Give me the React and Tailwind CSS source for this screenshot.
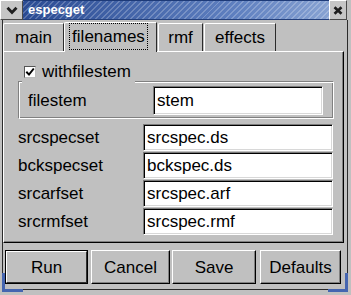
export default function App() {
  const raised =
    "border-t border-l border-t-white border-l-white border-b border-r border-b-black border-r-black shadow-[inset_-1px_-1px_0_#808080]";
  const Entry = ({ value, w }) => (
    <div
      className={`${w} h-full bg-white border border-t-[#7a7a7a] border-l-[#7a7a7a] border-b-white border-r-white shadow-[inset_1px_1px_0_#000,inset_-1px_-1px_0_#d8d8d8] pl-[3px] flex items-center text-[17px] leading-none`}
    >
      {value}
    </div>
  );
  const rows = [
    ["srcspecset", "srcspec.ds"],
    ["bckspecset", "bckspec.ds"],
    ["srcarfset", "srcspec.arf"],
    ["srcrmfset", "srcspec.rmf"],
  ];
  return (
    <div className="relative w-[351px] h-[295px] overflow-hidden bg-[#c0c0c0] font-['Liberation_Sans',Arial,sans-serif] text-black select-none">
      {/* title bar */}
      <div className="flex h-[20px]">
        <div className="w-[23px] h-[20px] flex items-center justify-center bg-[#c6c6c6] border-t border-l border-white border-r border-b border-r-[#4a4a4a] border-b-[#4a4a4a]">
          <svg width="12" height="9" viewBox="0 0 12 9">
            <path d="M1.5 1.8 L6 6.5 L10.5 1.8" fill="none" stroke="#1e1e1e" strokeWidth="2.8" />
          </svg>
        </div>
        <div className="flex-1 h-[20px] flex items-center pl-[5px] border-t border-[#1d3a78] border-b border-b-[#24407c] bg-[image:repeating-linear-gradient(135deg,rgba(255,255,255,0.22)_0px,rgba(255,255,255,0.22)_1.4px,transparent_1.4px,transparent_4.2px),linear-gradient(to_right,#2a4b93,#5f80c0_70%,#87a2d2)]">
          <span className="text-white font-bold text-[13px] leading-none pb-[1px]">especget</span>
        </div>
        <div className="w-[18px] h-[20px] flex items-center justify-center bg-[#c6c6c6] border-t border-l border-white border-r border-b border-r-[#4a4a4a] border-b-[#4a4a4a]">
          <svg width="10" height="9" viewBox="0 0 10 9">
            <path d="M1.5 1.2 L8.5 7.8 M8.5 1.2 L1.5 7.8" fill="none" stroke="#1e1e1e" strokeWidth="2.6" />
          </svg>
        </div>
        <div className="w-[4px]" />
      </div>

      {/* body */}
      <div className="ml-[2px] w-[346px] h-[270px] border-l border-r border-b border-[#2b2b2b] flex flex-col">
        {/* tabs */}
        <div className="pt-[2px] h-[31px] flex items-end text-[17px] leading-none">
          <div className="w-[61px] h-[28px] flex items-center justify-center border-t border-l border-white border-r border-r-[#2b2b2b] rounded-tl-[2px]">
            main
          </div>
          <div className="relative z-10 w-[93px] h-[30px] -mb-px bg-[#c0c0c0] flex justify-center pt-0 pr-[4px] border-t border-l border-white border-r border-r-[#2b2b2b] rounded-tl-[2px]">
            <span className="h-[27px] px-[2px] flex items-center border border-dotted border-black">filenames</span>
          </div>
          <div className="ml-[1px] w-[45px] h-[28px] flex items-center justify-center border-t border-l border-white border-r border-r-[#2b2b2b] rounded-tl-[2px]">
            rmf
          </div>
          <div className="ml-[1px] w-[72px] h-[28px] flex items-center justify-center border-t border-l border-white border-r border-r-[#2b2b2b] rounded-tl-[2px]">
            effects
          </div>
        </div>

        {/* panel */}
        <div className="w-[341px] h-[192px] border-t border-l border-white border-b border-r border-b-black border-r-black shadow-[inset_-1px_-1px_0_#808080] flex flex-col text-[17px] leading-none">
          {/* frame */}
          <div className="relative ml-[14px] mt-[29px] w-[316px] h-[38px] border border-t-[#808080] border-l-[#808080] border-b-white border-r-white shadow-[inset_1px_1px_0_#fff,inset_-1px_-1px_0_#808080] flex items-center">
            <div className="absolute left-[3px] top-[-23px] w-[113px] h-[25px] bg-[#c0c0c0] flex items-center pl-[2px]">
              <div className="w-[12px] h-[12px] bg-white border border-t-[#555] border-l-[#555] border-b-[#bbb] border-r-[#bbb] flex items-center justify-center">
                <svg width="10" height="10" viewBox="0 0 10 10">
                  <path d="M1.3 4.8 L4 7.6 L8.8 1.5" fill="none" stroke="#000" strokeWidth="2" />
                </svg>
              </div>
              <span className="ml-[6px]">withfilestem</span>
            </div>
            <div className="pl-[9px] w-[134px]">filestem</div>
            <div className="h-[29px]">
              <Entry value="stem" w="w-[170px]" />
            </div>
          </div>

          {/* rows */}
          <div className="mt-[5px] flex flex-col gap-[1px]">
            {rows.map(([label, value]) => (
              <div key={label} className="h-[27px] flex items-center">
                <div className="pl-[14px] w-[139px]">{label}</div>
                <Entry value={value} w="w-[190px]" />
              </div>
            ))}
          </div>
        </div>

        {/* buttons */}
        <div className="mt-[7px] ml-[2px] flex h-[34px] text-[17px] leading-none">
          <div className="w-[83px] h-full border border-black">
            <div className="w-full h-full flex items-center justify-center border-t border-l border-white border-b border-r border-b-[#303030] border-r-[#303030]">
              Run
            </div>
          </div>
          <div className={`ml-[3px] w-[79px] h-full flex items-center justify-center ${raised}`}>Cancel</div>
          <div className={`ml-[2px] w-[84px] h-full flex items-center justify-center ${raised}`}>Save</div>
          <div className={`ml-[4px] w-[81px] h-full flex items-center justify-center ${raised}`}>Defaults</div>
        </div>
      </div>

      {/* resize corners */}
      <div className="absolute left-[2px] top-[273px] w-[3px] h-[19px] bg-[#4565b0]" />
      <div className="absolute left-[2px] top-[289px] w-[21px] h-[3px] bg-[#4565b0]" />
      <div className="absolute left-[345px] top-[273px] w-[3px] h-[19px] bg-[#4565b0]" />
      <div className="absolute left-[328px] top-[289px] w-[20px] h-[3px] bg-[#4565b0]" />
    </div>
  );
}
